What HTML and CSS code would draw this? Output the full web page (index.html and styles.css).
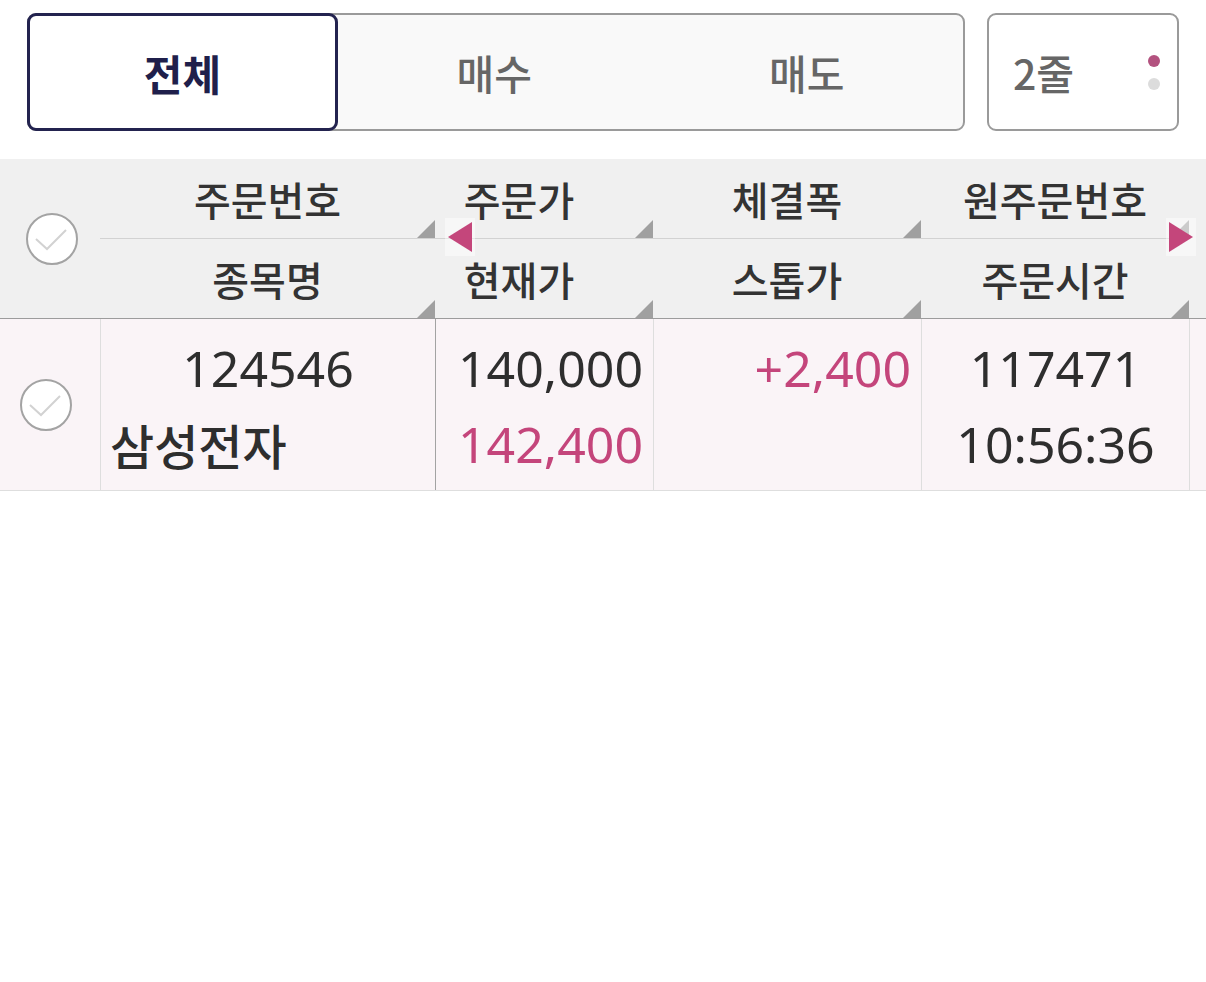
FILE: index.html
```html
<!DOCTYPE html>
<html lang="ko">
<head>
<meta charset="utf-8">
<title>주문</title>
<link rel="stylesheet" href="styles.css">
</head>
<body>
<div class="topbar">
  <div class="segmented">
    <div class="seg seg-active">전체</div>
    <div class="seg">매수</div>
    <div class="seg">매도</div>
  </div>
  <div class="lines-box">
    <span class="lines-label">2줄</span>
    <span class="dots"><i class="dot dot-on"></i><i class="dot"></i></span>
  </div>
</div>

<div class="grid">
  <div class="head">
    <div class="cell-check head-check">
      <svg class="check" width="52" height="52" viewBox="0 0 52 52"><circle cx="26" cy="26" r="25" fill="#fff" stroke="#a3a3a3" stroke-width="2"/><path d="M10 26 L21 36 L40 17" fill="none" stroke="#d2d2d2" stroke-width="2"/></svg>
    </div>
    <div class="hcol c1">
      <div class="hsub hsub-top"><span>주문번호</span></div>
      <div class="hsub"><span>종목명</span></div>
    </div>
    <div class="hcol c2">
      <div class="hsub hsub-top shift"><span>주문가</span></div>
      <div class="hsub shift"><span>현재가</span></div>
    </div>
    <div class="hcol c3">
      <div class="hsub hsub-top"><span>체결폭</span></div>
      <div class="hsub"><span>스톱가</span></div>
    </div>
    <div class="hcol c4">
      <div class="hsub hsub-top"><span>원주문번호</span></div>
      <div class="hsub"><span>주문시간</span></div>
    </div>
    <div class="hcol c5">
      <div class="hsub hsub-top"></div>
      <div class="hsub"></div>
    </div>
    <div class="nav nav-left"><svg width="24" height="30" viewBox="0 0 24 30"><path d="M0 15 L24 0 L24 30 Z" fill="#c4467b"/></svg></div>
    <div class="nav nav-right"><svg width="24" height="30" viewBox="0 0 24 30"><path d="M24 15 L0 0 L0 30 Z" fill="#c4467b"/></svg></div>
  </div>

  <div class="row">
    <div class="cell-check row-check">
      <svg class="check" width="52" height="52" viewBox="0 0 52 52"><circle cx="26" cy="26" r="25" fill="#fff" stroke="#a3a3a3" stroke-width="2"/><path d="M10 26 L21 36 L40 17" fill="none" stroke="#d2d2d2" stroke-width="2"/></svg>
    </div>
    <div class="dcol c1">
      <div class="line num center">124546</div>
      <div class="line kr left">삼성전자</div>
    </div>
    <div class="dcol c2 strong-left">
      <div class="line num right">140,000</div>
      <div class="line num right up">142,400</div>
    </div>
    <div class="dcol c3">
      <div class="line num right up">+2,400</div>
      <div class="line num right"></div>
    </div>
    <div class="dcol c4">
      <div class="line num center">117471</div>
      <div class="line num center">10:56:36</div>
    </div>
    <div class="dcol c5"></div>
  </div>
</div>
</body>
</html>
```

FILE: styles.css
```css
* { box-sizing: border-box; }
html, body { margin: 0; padding: 0; background: #fff; }
body {
  width: 1206px;
  height: 982px;
  font-family: "Noto Sans CJK KR", "Noto Sans", sans-serif;
  color: #333;
}

.topbar {
  display: flex;
  gap: 22px;
  padding: 13px 0 0 27px;
}

.segmented {
  display: flex;
  width: 938px;
  height: 118px;
  border: 2px solid #9a9a9a;
  border-radius: 9px;
  background: #f9f9f9;
}
.seg {
  flex: 1;
  display: flex;
  align-items: center;
  justify-content: center;
  font-size: 41px;
  font-weight: 500;
  color: #666;
}
.seg-active {
  flex: 0 0 311px;
  margin: -2px 0 -2px -2px;
  border: 3px solid #23234f;
  border-radius: 9px;
  background: #fff;
  color: #1f1f4b;
  font-size: 42px;
  font-weight: 700;
}

.lines-box {
  width: 192px;
  height: 118px;
  border: 2px solid #9a9a9a;
  border-radius: 9px;
  background: #fff;
  display: flex;
  align-items: center;
  justify-content: space-between;
  padding: 0 17px 0 24px;
}
.lines-label {
  font-size: 41px;
  font-weight: 500;
  color: #666;
}
.dots {
  display: flex;
  flex-direction: column;
  gap: 11px;
}
.dot {
  width: 12px;
  height: 12px;
  border-radius: 50%;
  background: #dcdcdc;
}
.dot-on { background: #b3527f; }

.grid { margin-top: 28px; }

.head {
  position: relative;
  display: flex;
  height: 160px;
  background: #f0f0f0;
  border-bottom: 1px solid #9c9c9c;
}
.cell-check {
  flex: 0 0 100px;
  display: flex;
  align-items: center;
}
.head-check { padding-left: 26px; }
.row-check { padding-left: 20px; }
.check { display: block; }

.c1 { flex: 0 0 335px; }
.c2 { flex: 0 0 218px; }
.c3 { flex: 0 0 268px; }
.c4 { flex: 0 0 268px; }
.c5 { flex: 0 0 17px; }

.hcol {
  display: flex;
  flex-direction: column;
}
.hsub {
  position: relative;
  height: 79px;
  display: flex;
  align-items: center;
  justify-content: center;
  padding-top: 1px;
  font-size: 40px;
  font-weight: 500;
  color: #333;
}
.hsub-top {
  height: 80px;
  border-bottom: 1px solid #d2d2d2;
}
.hsub.shift { padding-right: 50px; }
.hcol.c1 .hsub::after,
.hcol.c2 .hsub::after,
.hcol.c3 .hsub::after,
.hcol.c4 .hsub::after {
  content: "";
  position: absolute;
  right: 0;
  bottom: 0;
  width: 18px;
  height: 18px;
  background: #a0a0a0;
  clip-path: polygon(100% 0, 100% 100%, 0 100%);
}
.hcol.c5 .hsub { border-bottom: 0; }

.nav {
  position: absolute;
  top: 59px;
  width: 30px;
  height: 38px;
  display: flex;
  align-items: center;
  justify-content: center;
  background: rgba(255, 255, 255, 0.45);
}
.nav-left { left: 445px; }
.nav-right { left: 1166px; }

.row {
  display: flex;
  height: 172px;
  background: #faf4f7;
  border-bottom: 1px solid #dedede;
}
.dcol {
  border-left: 1px solid #dedede;
  padding-top: 11px;
}
.dcol.strong-left { border-left-color: #a3a3a3; }
.line {
  height: 76px;
  line-height: 76px;
  white-space: nowrap;
}
.num {
  font-family: "Noto Sans", "Noto Sans CJK KR", sans-serif;
  font-size: 50px;
  color: #2e2e2e;
}
.kr {
  font-size: 48px;
  font-weight: 500;
  color: #2e2e2e;
}
.center { text-align: center; }
.left { text-align: left; padding-left: 9px; }
.right { text-align: right; padding-right: 10px; }
.up { color: #c4457b; }
```
